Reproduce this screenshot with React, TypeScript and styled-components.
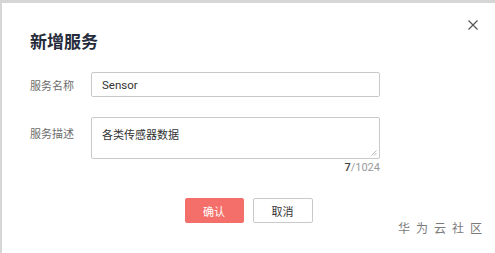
import React from "react";
import styled, { createGlobalStyle } from "styled-components";

const Global = createGlobalStyle`
  html, body { margin: 0; padding: 0; }
  body {
    background: #d6d6d6;
    font-family: Roboto, "Noto Sans CJK SC", "Noto Sans", sans-serif;
    width: 495px;
    height: 253px;
    overflow: hidden;
  }
`;

const Page = styled.div`
  width: 495px;
  height: 253px;
  box-sizing: border-box;
  padding: 3px 0 0 2px;
  display: flex;
`;

const Dialog = styled.div`
  position: relative;
  flex: 1;
  background: #fff;
  box-sizing: border-box;
  padding: 28px 28px 0 28px;
  display: flex;
  flex-direction: column;
`;

const Title = styled.h2`
  margin: 0;
  font-family: "Noto Sans CJK SC", sans-serif;
  font-size: 17px;
  line-height: 20px;
  font-weight: 700;
  color: #252b3a;
`;

const CloseButton = styled.button`
  position: absolute;
  top: 14px;
  right: 14px;
  width: 16px;
  height: 16px;
  padding: 0;
  border: 0;
  background: transparent;
  display: flex;
  align-items: center;
  justify-content: center;
`;

const Form = styled.div`
  display: flex;
  flex-direction: column;
  margin-top: 21px;
  width: 350px;
`;

const Row = styled.div<{ $top?: number; $align?: string }>`
  display: flex;
  align-items: ${(p) => p.$align || "center"};
  margin-top: ${(p) => p.$top || 0}px;
`;

const Label = styled.label<{ $pt?: number }>`
  width: 61px;
  flex: none;
  font-family: "Noto Sans CJK SC", sans-serif;
  font-size: 11px;
  line-height: 14px;
  color: #6b6b6b;
  padding-top: ${(p) => p.$pt || 0}px;
`;

const Input = styled.div`
  width: 289px;
  height: 25px;
  box-sizing: border-box;
  border: 1px solid #c9c9c9;
  border-radius: 2px;
  padding: 0 10px;
  display: flex;
  align-items: center;
  font-size: 11.5px;
  color: #333;
`;

const TextArea = styled.div`
  position: relative;
  width: 289px;
  height: 42px;
  box-sizing: border-box;
  border: 1px solid #c9c9c9;
  border-radius: 2px;
  padding: 8px 10px;
  font-family: "Noto Sans CJK SC", sans-serif;
  font-size: 11px;
  line-height: 16px;
  color: #333;
`;

const Grip = styled.svg`
  position: absolute;
  right: 2px;
  bottom: 2px;
`;

const Counter = styled.div`
  align-self: flex-end;
  margin-top: 2px;
  font-size: 11px;
  line-height: 14px;
  color: #9a9a9a;
  b { color: #444; font-weight: 500; }
`;

const Buttons = styled.div`
  display: flex;
  justify-content: center;
  gap: 9px;
  margin-top: 23px;
`;

const Button = styled.button<{ $primary?: boolean }>`
  width: ${(p) => (p.$primary ? 59 : 60)}px;
  height: 25px;
  box-sizing: border-box;
  border-radius: 2px;
  border: 1px solid ${(p) => (p.$primary ? "#f46f6a" : "#c9c9c9")};
  background: ${(p) => (p.$primary ? "#f46f6a" : "#fff")};
  color: ${(p) => (p.$primary ? "#fff" : "#333")};
  font-family: "Noto Sans CJK SC", sans-serif;
  font-size: 11px;
  padding: 0;
`;

const Watermark = styled.div`
  position: absolute;
  right: 7px;
  bottom: 18px;
  font-family: "Noto Sans CJK SC", sans-serif;
  font-size: 12px;
  line-height: 14px;
  letter-spacing: 6px;
  color: #7a7a7a;
`;

export default function App() {
  return (
    <>
      <Global />
      <Page>
        <Dialog>
          <Title>新增服务</Title>
          <CloseButton aria-label="close">
            <svg width="10" height="10" viewBox="0 0 10 10">
              <path d="M0.5 0.5 L9.5 9.5 M9.5 0.5 L0.5 9.5" stroke="#555" strokeWidth="1.2" />
            </svg>
          </CloseButton>
          <Form>
            <Row>
              <Label>服务名称</Label>
              <Input>Sensor</Input>
            </Row>
            <Row $top={20} $align="flex-start">
              <Label $pt={9}>服务描述</Label>
              <TextArea>
                各类传感器数据
                <Grip width="6" height="6" viewBox="0 0 6 6">
                  <path d="M5.5 0.5 L0.5 5.5 M5.5 3 L3 5.5" stroke="#aaa" strokeWidth="0.8" />
                </Grip>
              </TextArea>
            </Row>
            <Counter>
              <b>7</b>/1024
            </Counter>
          </Form>
          <Buttons>
            <Button $primary>确认</Button>
            <Button>取消</Button>
          </Buttons>
          <Watermark>华为云社区</Watermark>
        </Dialog>
      </Page>
    </>
  );
}
